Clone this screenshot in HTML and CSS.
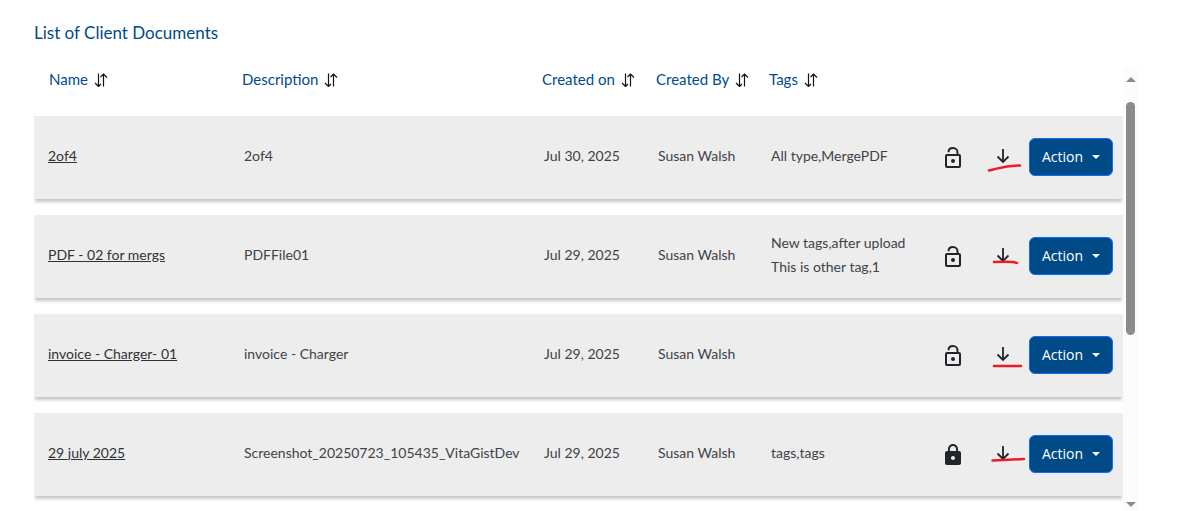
FILE: index.html
```html
<!DOCTYPE html>
<html lang="en">
<head>
    <meta charset="UTF-8">
    <meta name="viewport" content="width=device-width, initial-scale=1.0">
    <title>Client Documents</title>
    <link rel="stylesheet" href="styles.css">
</head>
<body>
    <!-- Shared icons -->
    <svg class="icon-defs" aria-hidden="true">
        <symbol id="icon-sort" viewBox="0 0 14 14">
            <path d="M4.500 0.500v12.500M1 10l3.500 3.500L7 11M9.500 13.500V1M6.500 4l3-3L13 4.500" fill="none" stroke="#111" stroke-width="1.200"/>
        </symbol>
        <symbol id="icon-unlocked" viewBox="0 0 24 24">
            <path d="M7.500 6.200C7.500 3.500 9.500 1.900 12 1.900s4.500 1.900 4.500 4.300v3" fill="none" stroke="#212529" stroke-width="2"/>
            <rect x="5" y="9" width="14" height="12" rx="1" fill="none" stroke="#212529" stroke-width="2"/>
            <circle cx="12" cy="15" r="2" fill="#212529"/>
        </symbol>
        <symbol id="icon-locked" viewBox="0 0 24 24">
            <path d="M18 8h-1V6c0-2.760-2.240-5-5-5S7 3.240 7 6v2H6c-1.100 0-2 .9-2 2v10c0 1.100.9 2 2 2h12c1.100 0 2-.9 2-2V10c0-1.100-.9-2-2-2zm-6 9c-1.100 0-2-.9-2-2s.9-2 2-2 2 .9 2 2-.9 2-2 2zm3.100-9H8.900V6c0-1.710 1.390-3.100 3.100-3.100s3.100 1.390 3.100 3.100v2z" fill="#212529"/>
        </symbol>
        <symbol id="icon-download" viewBox="0 0 14 16">
            <path d="M7 1v13M1.500 8.500L7 14l5.500-5.500" fill="none" stroke="#212529" stroke-width="1.800"/>
        </symbol>
    </svg>

    <div class="container">
        <h1>List of Client Documents</h1>

        <div class="documents">
            <div class="table-wrap">
                <table>
                    <colgroup>
                        <col class="col-name">
                        <col>
                        <col class="col-date">
                        <col class="col-author">
                        <col class="col-tags">
                        <col class="col-icon">
                        <col class="col-icon">
                        <col class="col-action">
                    </colgroup>
                    <thead>
                        <tr>
                            <th><button class="sort">Name <svg><use href="#icon-sort"/></svg></button></th>
                            <th><button class="sort">Description <svg><use href="#icon-sort"/></svg></button></th>
                            <th><button class="sort">Created on <svg><use href="#icon-sort"/></svg></button></th>
                            <th><button class="sort">Created By <svg><use href="#icon-sort"/></svg></button></th>
                            <th><button class="sort">Tags <svg><use href="#icon-sort"/></svg></button></th>
                            <th></th>
                            <th></th>
                            <th></th>
                        </tr>
                    </thead>
                    <tbody>
                        <tr>
                            <td><a href="#">2of4</a></td>
                            <td>2of4</td>
                            <td>Jul 30, 2025</td>
                            <td>Susan Walsh</td>
                            <td>All type,MergePDF</td>
                            <td class="icon-cell"><button class="icon-btn" aria-label="Unlocked"><svg class="lock"><use href="#icon-unlocked"/></svg></button></td>
                            <td class="icon-cell"><button class="icon-btn" aria-label="Download"><svg class="download"><use href="#icon-download"/></svg><svg class="mark" viewBox="0 0 40 16"><path d="M6 13.500C16 11.500 20 8.500 37 8.500"/></svg></button></td>
                            <td class="action-cell"><button class="action">Action</button></td>
                        </tr>
                        <tr>
                            <td><a href="#">PDF - 02 for mergs</a></td>
                            <td>PDFFile01</td>
                            <td>Jul 29, 2025</td>
                            <td>Susan Walsh</td>
                            <td>New tags,after upload<br>This is other tag,1</td>
                            <td class="icon-cell"><button class="icon-btn" aria-label="Unlocked"><svg class="lock"><use href="#icon-unlocked"/></svg></button></td>
                            <td class="icon-cell"><button class="icon-btn" aria-label="Download"><svg class="download"><use href="#icon-download"/></svg><svg class="mark" viewBox="0 0 40 16"><path d="M11 6C20 5.500 30 5 34 7"/></svg></button></td>
                            <td class="action-cell"><button class="action">Action</button></td>
                        </tr>
                        <tr>
                            <td><a href="#">invoice - Charger- 01</a></td>
                            <td>invoice - Charger</td>
                            <td>Jul 29, 2025</td>
                            <td>Susan Walsh</td>
                            <td></td>
                            <td class="icon-cell"><button class="icon-btn" aria-label="Unlocked"><svg class="lock"><use href="#icon-unlocked"/></svg></button></td>
                            <td class="icon-cell"><button class="icon-btn" aria-label="Download"><svg class="download"><use href="#icon-download"/></svg><svg class="mark" viewBox="0 0 40 16"><path d="M11 11H38"/></svg></button></td>
                            <td class="action-cell"><button class="action">Action</button></td>
                        </tr>
                        <tr>
                            <td><a href="#">29 july 2025</a></td>
                            <td>Screenshot_20250723_105435_VitaGistDev</td>
                            <td>Jul 29, 2025</td>
                            <td>Susan Walsh</td>
                            <td>tags,tags</td>
                            <td class="icon-cell"><button class="icon-btn" aria-label="Locked"><svg class="lock"><use href="#icon-locked"/></svg></button></td>
                            <td class="icon-cell"><button class="icon-btn" aria-label="Download"><svg class="download"><use href="#icon-download"/></svg><svg class="mark" viewBox="0 0 40 16"><path d="M9.500 6.500C20 6 30 5.500 41 5"/></svg></button></td>
                            <td class="action-cell"><button class="action">Action</button></td>
                        </tr>
                    </tbody>
                </table>
            </div>

            <div class="scrollbar" aria-hidden="true">
                <span class="arrow-up"></span>
                <span class="thumb"></span>
                <span class="arrow-down"></span>
            </div>
        </div>
    </div>
</body>
</html>
```
FILE: styles.css
```css
* {
    box-sizing: border-box;
}
body {
    font-family: Lato, "Open Sans", sans-serif;
    font-size: 14px;
    line-height: 24px;
    color: #3f4347;
    background-color: #fff;
    margin: 0;
}
.icon-defs {
    display: none;
}
.container {
    display: flex;
    flex-direction: column;
    height: 100vh;
    padding: 19px 59px 0 34px;
}
h1 {
    color: #004b87;
    font-size: 17px;
    font-weight: 400;
    line-height: 28px;
    margin: 0 0 20px;
}
.documents {
    display: flex;
    flex: 1;
    min-height: 0;
}
.table-wrap {
    flex: 1;
    min-width: 0;
    overflow: hidden;
}
table {
    width: 100%;
    table-layout: fixed;
    border-collapse: separate;
    border-spacing: 0 16px;
    margin-top: -16px;
}
.col-name {
    width: 196px;
}
.col-date {
    width: 114px;
}
.col-author {
    width: 113px;
}
.col-tags {
    width: 171px;
}
.col-icon {
    width: 50px;
}
.col-action {
    width: 95px;
}
th {
    height: 33px;
    padding: 0 0 9px 12px;
    text-align: left;
}
td {
    height: 83px;
    padding: 0 0 4px 14px;
    vertical-align: middle;
}
tbody tr {
    background-color: #ededed;
    box-shadow: 0 4px 3px -1px rgba(0, 0, 0, 0.22);
}
td a {
    color: #2f3337;
    text-decoration: underline;
}
button {
    font: inherit;
    border: none;
    background: none;
    padding: 0;
    cursor: pointer;
}
.sort {
    display: flex;
    align-items: center;
    gap: 6px;
    color: #004b93;
    font-size: 15px;
    font-weight: 400;
    white-space: nowrap;
}
th:first-child {
    padding-left: 15px;
}
.sort svg {
    width: 14px;
    height: 14px;
    margin-top: 2px;
}
.icon-cell {
    padding: 0;
    text-align: center;
}
.icon-btn {
    position: relative;
    display: inline-flex;
    align-items: center;
    justify-content: center;
    width: 24px;
    height: 24px;
    vertical-align: middle;
}
.lock {
    width: 24px;
    height: 24px;
}
.download {
    width: 14px;
    height: 16px;
    margin-bottom: 5px;
}
/* red pen stroke under the download arrow */
.mark {
    position: absolute;
    left: -8px;
    top: 11px;
    width: 40px;
    height: 16px;
    overflow: visible;
}
.mark path {
    fill: none;
    stroke: #ed1c24;
    stroke-width: 2.500;
    stroke-linecap: round;
}
.action-cell {
    padding: 0 10px 2px 1px;
}
.action {
    display: flex;
    align-items: center;
    justify-content: space-between;
    width: 100%;
    height: 38px;
    padding: 0 12px;
    color: #fff;
    background-color: #004b87;
    border: 1px solid #0d6efd;
    border-radius: 6px;
    font-family: "Open Sans", sans-serif;
    font-size: 14px;
    font-weight: 400;
}
.action::after {
    content: "";
    border-top: 4px solid #fff;
    border-left: 4px solid transparent;
    border-right: 4px solid transparent;
}
.scrollbar {
    display: flex;
    flex-direction: column;
    align-items: center;
    width: 15px;
    padding: 10px 0 4px;
    background-color: #fcfcfc;
}
.arrow-up {
    border-bottom: 5px solid #8b8b8b;
    border-left: 5px solid transparent;
    border-right: 5px solid transparent;
}
.thumb {
    width: 9px;
    height: 233px;
    margin-top: 20px;
    border-radius: 5px;
    background-color: #8b8b8b;
}
.arrow-down {
    margin-top: auto;
    border-top: 5px solid #8b8b8b;
    border-left: 5px solid transparent;
    border-right: 5px solid transparent;
}
```
